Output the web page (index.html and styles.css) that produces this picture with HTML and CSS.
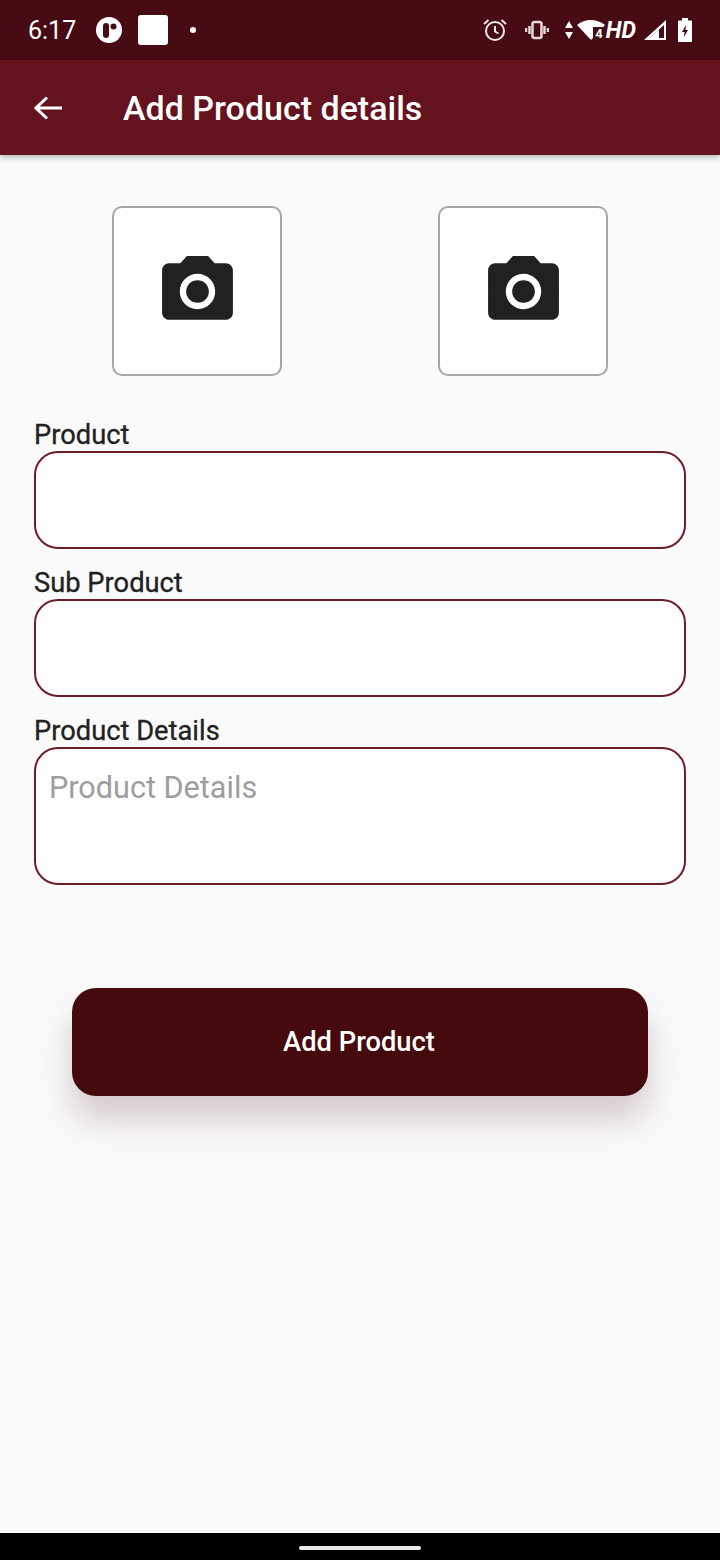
FILE: index.html
```html
<!DOCTYPE html>
<html lang="en">
<head>
    <meta charset="UTF-8">
    <meta name="viewport" content="width=device-width, initial-scale=1.0">
    <title>Add Product details</title>
    <link rel="stylesheet" href="styles.css">
</head>
<body>
    <!-- Status Bar -->
    <div class="status-bar">
        <div class="status-left">
            <span class="status-time">6:17</span>
            <svg class="app-badge" width="26" height="26" viewBox="0 0 26 26">
                <circle cx="13" cy="13" r="13" fill="#fff"/>
                <rect x="7" y="6" width="6" height="15" rx="3" fill="#470b14"/>
                <circle cx="17.5" cy="9.5" r="3" fill="#470b14"/>
            </svg>
            <span class="app-square"></span>
            <span class="status-dot"></span>
        </div>
        <div class="status-right">
            <svg class="icon-alarm" width="24" height="24" viewBox="0 0 24 24" fill="none" stroke="#f2e6e7" stroke-width="2">
                <circle cx="12" cy="13" r="9"/>
                <path d="M12 8v5.500l3.500 2M1 6l4.500-4M23 6l-4.500-4"/>
            </svg>
            <svg class="icon-vibrate" width="24" height="24" viewBox="0 0 24 24" fill="none" stroke="#e8d8da" stroke-width="2.5">
                <rect x="7.500" y="4" width="9" height="16" rx="2"/>
                <path d="M4.500 8v8M19.500 8v8M1 10v4M23 10v4"/>
            </svg>
            <svg class="icon-arrows" width="10" height="20" viewBox="0 0 10 20" fill="#fff">
                <path d="M5 1l4 7H1zM5 19l-4-7h8z"/>
            </svg>
            <span class="wifi-wrap">
                <svg width="28" height="22" viewBox="0 0 28 22" fill="#fff">
                    <path d="M0 6C4 2.500 9 1 13.500 1S24 2.500 28 6L14 21z"/>
                </svg>
                <span class="wifi-num">4</span>
            </span>
            <span class="status-hd">HD</span>
            <svg class="icon-signal" width="22" height="20" viewBox="0 0 22 20" fill="#fff">
                <path d="M22 0v20H0zM20 5L5.500 18H20z" fill-rule="evenodd"/>
                <path d="M15 9.500L5.500 18H15z"/>
            </svg>
            <svg class="icon-battery" width="14" height="24" viewBox="0 0 14 24">
                <path d="M4 0h6v2.500h3a1 1 0 0 1 1 1V23a1 1 0 0 1-1 1H1a1 1 0 0 1-1-1V3.500a1 1 0 0 1 1-1h3z" fill="#fff"/>
                <path d="M8 7l-4 7h2.500L6 19l4-7H7.500z" fill="#470b14"/>
            </svg>
        </div>
    </div>

    <!-- App Bar -->
    <div class="app-bar">
        <svg class="back-icon" width="28" height="26" viewBox="0 0 28 26" fill="none" stroke="#fff" stroke-width="3">
            <path d="M28 13H2M13 2.500L2 13l11 10.500"/>
        </svg>
        <div class="app-title">Add Product details</div>
    </div>

    <div class="content">
        <!-- Photo Pickers -->
        <div class="photo-row">
            <div class="photo-box">
                <svg width="85" height="85" viewBox="0 0 24 24" fill="#212121">
                    <circle cx="12" cy="12" r="3.200"/>
                    <path d="M9 2L7.170 4H4c-1.100 0-2 .9-2 2v12c0 1.100.9 2 2 2h16c1.100 0 2-.9 2-2V6c0-1.100-.9-2-2-2h-3.170L15 2H9zm3 15c-2.760 0-5-2.240-5-5s2.240-5 5-5 5 2.240 5 5-2.240 5-5 5z"/>
                </svg>
            </div>
            <div class="photo-box">
                <svg width="85" height="85" viewBox="0 0 24 24" fill="#212121">
                    <circle cx="12" cy="12" r="3.200"/>
                    <path d="M9 2L7.170 4H4c-1.100 0-2 .9-2 2v12c0 1.100.9 2 2 2h16c1.100 0 2-.9 2-2V6c0-1.100-.9-2-2-2h-3.170L15 2H9zm3 15c-2.760 0-5-2.240-5-5s2.240-5 5-5 5 2.240 5 5-2.240 5-5 5z"/>
                </svg>
            </div>
        </div>

        <!-- Form -->
        <div class="field">
            <label class="field-label">Product</label>
            <input class="field-input" type="text">
        </div>
        <div class="field">
            <label class="field-label">Sub Product</label>
            <input class="field-input" type="text">
        </div>
        <div class="field">
            <label class="field-label">Product Details</label>
            <textarea class="field-input field-area" placeholder="Product Details"></textarea>
        </div>

        <button class="add-button">Add Product</button>
    </div>

    <!-- Nav Bar -->
    <div class="nav-bar">
        <div class="nav-handle"></div>
    </div>
</body>
</html>
```

FILE: styles.css
```css
/* General Reset */
body {
    margin: 0;
    font-family: Roboto, "Liberation Sans", sans-serif;
    background: #fafafa;
    color: #212121;
    display: flex;
    flex-direction: column;
    height: 100vh;
    overflow: hidden;
}

/* Status Bar */
.status-bar {
    height: 60px;
    flex-shrink: 0;
    background: #470b14;
    color: #fff;
    display: flex;
    align-items: center;
    justify-content: space-between;
    padding: 0 28px;
}

.status-left,
.status-right {
    display: flex;
    align-items: center;
}

.status-time {
    font-size: 25px;
    width: 68px;
}

.app-square {
    width: 30px;
    height: 30px;
    margin-left: 16px;
    background: #fff;
    border-radius: 3px;
}

.status-dot {
    width: 6px;
    height: 6px;
    margin-left: 22px;
    background: #fff;
    border-radius: 50%;
}

.status-right svg {
    display: block;
}

.icon-vibrate {
    margin-left: 18px;
}

.icon-arrows {
    margin-left: 15px;
}

.wifi-wrap {
    position: relative;
    margin-left: 3px;
}

.wifi-num {
    position: absolute;
    right: 2px;
    bottom: 0;
    font-size: 13px;
    font-weight: 700;
    line-height: 14px;
    background: #470b14;
    padding-left: 2px;
}

.status-hd {
    margin-left: 1px;
    font-size: 23px;
    font-weight: 700;
    font-style: italic;
}

.icon-signal {
    margin-left: 8px;
}

.icon-battery {
    margin-left: 12px;
}

/* App Bar */
.app-bar {
    height: 95px;
    flex-shrink: 0;
    background: #64121d;
    color: #fff;
    display: flex;
    align-items: center;
    padding-left: 34px;
    box-shadow: 0 2px 6px rgba(0, 0, 0, 0.3);
    position: relative;
}

.back-icon {
    flex-shrink: 0;
}

.app-title {
    margin-left: 61px;
    font-size: 34px;
    font-weight: 500;
}

/* Main Content */
.content {
    flex: 1;
    padding: 51px 34px 0;
}

.photo-row {
    display: flex;
    gap: 156px;
    justify-content: center;
    margin-bottom: 40px;
}

.photo-box {
    width: 170px;
    height: 170px;
    box-sizing: border-box;
    background: #fff;
    border: 2px solid #a6a6a6;
    border-radius: 10px;
    display: flex;
    align-items: center;
    justify-content: center;
}

/* Fields */
.field {
    margin-bottom: 15px;
}

.field-label {
    display: block;
    height: 35px;
    line-height: 38px;
    font-size: 27.3px;
    font-weight: 400;
    -webkit-text-stroke: 0.3px #212121;
}

.field-input {
    display: block;
    width: 100%;
    height: 98px;
    box-sizing: border-box;
    background: #fff;
    border: 2px solid #6b1d29;
    border-radius: 24px;
    outline: none;
    padding: 0 13px;
    font-family: inherit;
    font-size: 30.6px;
}

.field-area {
    height: 138px;
    padding-top: 21px;
    resize: none;
}

.field-area::placeholder {
    color: #9e9e9e;
    opacity: 1;
}

/* Button */
.add-button {
    display: block;
    width: 576px;
    height: 108px;
    margin: 103px auto 0;
    padding: 0 2px 0 0;
    background: #440a0e;
    color: #fff;
    border: none;
    border-radius: 24px;
    font-family: inherit;
    font-size: 27.3px;
    font-weight: 500;
    box-shadow: 0 24px 34px rgba(71, 11, 20, 0.2);
}

/* Nav Bar */
.nav-bar {
    height: 27px;
    flex-shrink: 0;
    background: #000;
    display: flex;
    justify-content: center;
    padding-top: 13px;
    box-sizing: border-box;
}

.nav-handle {
    width: 122px;
    height: 4px;
    background: #e8e8e8;
    border-radius: 2px;
}
```
